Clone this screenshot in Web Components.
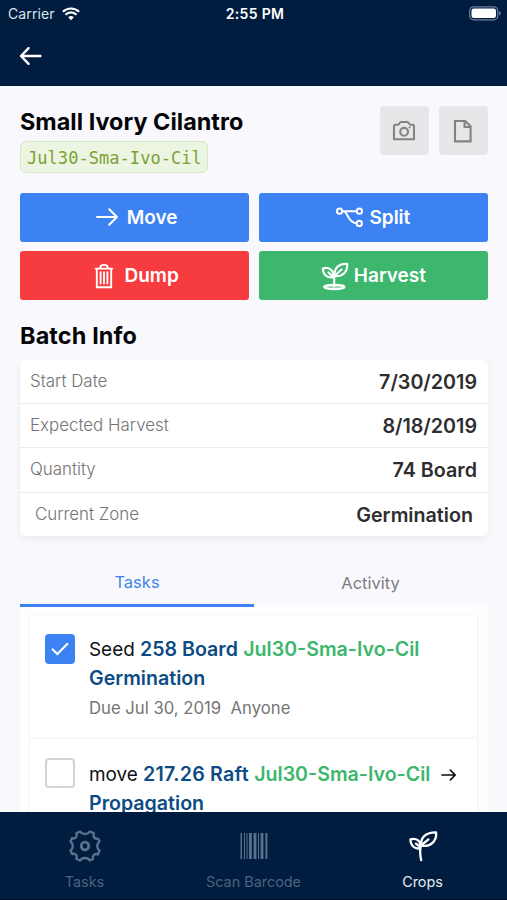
<!DOCTYPE html>
<html lang="en">
<head>
<meta charset="utf-8">
<title>Crops</title>
<style>
html,body{margin:0;height:100%;background:#f8f8fd;font-family:Inter,"Liberation Sans",sans-serif}
</style>
</head>
<body>
<crop-app></crop-app>
<script>
const ICONS = {
  wifi: `<svg width="18" height="14" viewBox="0 0 18 14" fill="#fff"><path d="M9 13.2 6.2 10.3a4 4 0 0 1 5.6 0Z"/><path d="M3.5 7.7a7.8 7.8 0 0 1 11 0M.9 4.8a11.6 11.6 0 0 1 16.2 0" fill="none" stroke="#fff" stroke-width="2.2"/></svg>`,
  battery: `<svg width="32" height="15" viewBox="0 0 32 15"><rect x=".7" y=".8" width="28" height="13" rx="3.8" fill="none" stroke="#6f7f9a" stroke-width="1.2"/><rect x="2.5" y="2.6" width="24.5" height="9.4" rx="2.2" fill="#fff"/><path d="M30 5v4.4q1.6-.8 1.6-2.2T30 5Z" fill="#7b8aa3"/></svg>`,
  back: `<svg width="24" height="20" viewBox="0 0 24 20" fill="none" stroke="#fff" stroke-width="2.4" stroke-linecap="round" stroke-linejoin="round"><path d="M21.4 10H2M9.6 2.2 2 10l7.6 7.8"/></svg>`,
  camera: `<svg width="24" height="22" viewBox="0 0 24 22" fill="none" stroke="#838383" stroke-width="2.1"><path d="M2 6.2Q2 4.8 3.4 4.8H5.2Q6.5 4.8 7.3 3.4T9.2 2H15Q16.3 2 17 3.4T19 4.8H20.7Q22 4.8 22 6.2V19.3H2Z"/><circle cx="12.1" cy="11.8" r="3.9"/><circle cx="17.6" cy="7.4" r="1.1" fill="#838383" stroke="none"/></svg>`,
  doc: `<svg width="20" height="24" viewBox="0 0 20 24" fill="none" stroke="#838383" stroke-width="2.1"><path d="M2 2H12.2L17.6 7.3V22.4H2Z"/><path d="M11.6 2V8H17.6"/></svg>`,
  move: `<svg width="24" height="20" viewBox="0 0 24 20" fill="none" stroke="#fff" stroke-width="2" stroke-linecap="round" stroke-linejoin="round"><path d="M2 10H22M14.2 2.2 22 10l-7.8 7.8"/></svg>`,
  trash: `<svg width="20" height="26" viewBox="0 0 20 26" fill="none" stroke="#fff" stroke-width="1.9" stroke-linecap="round" stroke-linejoin="round"><path d="M1.6 5.6H18.4M2.8 6V24.2H17.2V6M6.2 5C6.2 .8 13.8 .8 13.8 5M6.6 9.2V20.6M10 9.2V20.6M13.4 9.2V20.6"/></svg>`,
  split: `<svg width="28" height="22" viewBox="0 0 28 22" fill="none" stroke="#fff" stroke-width="2"><circle cx="3.6" cy="5.2" r="2.6"/><circle cx="23.4" cy="5.2" r="2.6"/><circle cx="23.3" cy="17.4" r="2.6"/><path d="M6.2 5.2H20.8M8.2 5.2C12 6.6 11.4 16.4 20.6 17.4"/></svg>`,
  harvest: `<svg width="28" height="30" viewBox="0 0 28 30" fill="none" stroke="#fff" stroke-width="2.1" stroke-linecap="round" stroke-linejoin="round"><path d="M13.2 15.2C13.2 6.6 18 2.4 26.2 2.8 26.6 10.8 22 16 13.2 15.2ZM12.4 16.2C6.4 17.4 2 14 1.8 7.4 8.4 5.6 12.8 9.2 12.4 16.2ZM13.2 15.2 20.6 8.4M12.4 16.2 7.4 11.4M13.2 15.4V25.4"/><ellipse cx="13.3" cy="26" rx="10.2" ry="2.1" fill="#fff" fill-opacity=".45"/></svg>`,
  check: `<svg width="18" height="14" viewBox="0 0 18 14" fill="none" stroke="#fff" stroke-width="2"><path d="M1 6.8 6.3 12 17 1.2"/></svg>`,
  arrow: `<svg width="16" height="14" viewBox="0 0 16 14" fill="none" stroke="#111" stroke-width="1.7" stroke-linecap="round" stroke-linejoin="round"><path d="M1 7H14.2M9.4 2.2 14.2 7 9.4 11.8"/></svg>`,
  gear: `<svg width="34" height="34" viewBox="0 0 34 34" fill="none" stroke="#5a708e" stroke-width="2.4" stroke-linejoin="round"><path d="M12.2 2.5C14.2 5.8 19.8 5.8 21.8 2.5L25.8 4.2C24.6 8 27 10.4 30 9.6L31.5 12.4C28.4 15 28.4 19 31.5 21.6L29.8 25.4C26.5 24.2 24 26.5 25 30L21.8 31.5C19.8 28.2 14.2 28.2 12.2 31.5L8.4 30C9.8 26.4 7.4 24 4.2 25L2.5 21.6C5.6 19 5.6 15 2.5 12.4L4 9.2C7.4 10.2 9.8 7.4 8.4 4Z"/><circle cx="17" cy="17" r="3.8" stroke-width="2.8"/></svg>`,
  barcode: `<svg width="28" height="28" viewBox="0 0 28 28" fill="#5a708e"><path d="M.5 1H2v26H.5zM4 1h1v26H4zM6.5 1h1v26h-1zM9 1h2.8v26H9zM13.6 1h2.8v26h-2.8zM18 1h1v26h-1zM20.6 1h2.8v26h-2.8zM25.4 1h2v26h-2z"/></svg>`,
  sprout: `<svg width="30" height="32" viewBox="0 0 30 32" fill="none" stroke="#fff" stroke-width="2.3" stroke-linecap="round" stroke-linejoin="round"><path d="M13.2 15.4C12.4 7 18.4 2.2 28 2.4 29.2 10.4 22.4 18 13.2 15.4ZM12.6 17.8C7.6 20 2.6 16.2 2.4 9.4 8.4 7.6 13.4 11 12.6 17.8ZM13.2 15.4 20.4 9.4M12.6 17.4 8 13.6M12.8 16C11.8 20.6 12 25.4 13.2 30.2"/></svg>`
};

function define(name, css, html) {
  customElements.define(name, class extends HTMLElement {
    constructor() {
      super();
      this.attachShadow({mode: 'open'}).innerHTML =
        '<style>*{box-sizing:border-box}:host{box-sizing:border-box}' + css + '</style>' + html;
    }
  });
}

customElements.define('ui-icon', class extends HTMLElement {
  constructor() { super(); this.attachShadow({mode: 'open'}); }
  connectedCallback() {
    this.shadowRoot.innerHTML =
      '<style>:host{display:inline-block;flex:none;line-height:0}svg{display:block}</style>' + ICONS[this.getAttribute('name')];
  }
});

define('status-bar',
  `:host{display:grid;grid-template-columns:1fr auto 1fr;align-items:center;height:28px;padding:0 6px 0 8px;color:#fff;font-size:14px;line-height:20px}
   .l{display:flex;align-items:center;gap:7px;color:#dfe4ec;letter-spacing:.1px}
   .t{font-weight:600;font-size:14px;letter-spacing:.35px;padding-left:1px}
   .r{display:flex;justify-content:flex-end;margin-top:-1px}`,
  `<div class="l"><span>Carrier</span><ui-icon name="wifi"></ui-icon></div><div class="t">2:55 PM</div><div class="r"><ui-icon name="battery"></ui-icon></div>`);

define('nav-header',
  `:host{display:block;background:#001d40;height:86px;flex:none}
   .bar{height:56px;display:flex;align-items:center;padding-left:19px}`,
  `<status-bar></status-bar><div class="bar"><ui-icon name="back"></ui-icon></div>`);

define('square-button',
  `:host{display:flex;align-items:center;justify-content:center;width:49px;height:49px;border-radius:4px;background:#e7e7e9}`,
  `<slot></slot>`);

define('code-tag',
  `:host{display:block;width:188px;height:32px;border:1px solid #d9e8c0;border-radius:6px;background:#ebf5e1;color:#7ba136;
    font:17px/32px "DejaVu Sans Mono",monospace;padding-left:6px;white-space:nowrap;letter-spacing:.05px}`,
  `<slot></slot>`);

define('action-button',
  `:host{display:flex;align-items:center;justify-content:center;height:49px;border-radius:3px;background:#3d82f2;color:#fff;font-weight:600;font-size:19px;gap:var(--gap,8px);padding-left:var(--shift,0)}
   :host([tone=danger]){background:#f63c3f}
   :host([tone=success]){background:#3cb76d}`,
  `<slot name="icon"></slot><span><slot></slot></span>`);

define('info-row',
  `:host{display:flex;justify-content:space-between;height:44.2px;padding:0 11px 0 10px;border-bottom:1px solid #ececef}
   :host(:last-child){border-bottom:0;padding:0 15px;height:43.6px}
   .k{font-size:16.9px;font-weight:300;color:#747474;line-height:42px}
   .v{font-size:19.7px;font-weight:600;color:#2e2e30;line-height:44px}`,
  `<span class="k"><slot name="label"></slot></span><span class="v"><slot></slot></span>`);

define('info-card',
  `:host{display:block;background:#fff;border-radius:5px;box-shadow:0 3px 8px rgba(0,0,0,.055)}`,
  `<slot></slot>`);

define('tab-bar',
  `:host{display:grid;grid-template-columns:1fr 1fr;height:44px;font-size:16.5px;text-align:center}
   .on{color:#4285e8;border-bottom:3px solid #3d82f2;line-height:43px}
   .off{color:#7d7d82;line-height:45px;padding-right:1px}`,
  `<div class="on"><slot name="active"></slot></div><div class="off"><slot></slot></div>`);

define('check-box',
  `:host{display:flex;align-items:center;justify-content:center;width:30px;height:30px;border-radius:4px;border:2px solid #d3d3d3;background:#fff;flex:none}
   ui-icon{display:none}
   :host([checked]){background:#3d82f2;border-color:#3d82f2}
   :host([checked]) ui-icon{display:block}`,
  `<ui-icon name="check"></ui-icon>`);

define('task-item',
  `:host{display:flex;gap:14px;height:125px;padding:18px 0 0 15px;border:2px solid #f7f7f8;border-top-color:#fbfbfc;border-radius:4px;background:#fff}
   :host(:last-child){border-top:0;padding-top:19.5px}
   .title{font-size:18.9px;line-height:29px;color:#111;white-space:nowrap;margin-top:1.5px}
   .meta{font-size:16.7px;line-height:22px;color:#757575;margin-top:4px;white-space:pre}
   ::slotted(b){font-weight:600;font-size:19.6px;color:#0d4b84}
   ::slotted(b.batch){color:#3cb76d}`,
  `<slot name="box"></slot><div><div class="title"><slot></slot></div><div class="meta"><slot name="meta"></slot></div></div>`);

define('tab-button',
  `:host{display:flex;flex-direction:column;align-items:center;color:#4c6180;font-size:14.4px;line-height:20px}
   :host([active]){color:#e6ebf2}
   .i{height:36px;display:flex;align-items:center;margin-bottom:8px}`,
  `<div class="i"><slot name="icon"></slot></div><span><slot></slot></span>`);

define('bottom-bar',
  `:host{display:grid;grid-template-columns:repeat(3,1fr);height:88px;padding-top:16px;background:#001d40;flex:none;border-bottom:1px solid #001027}`,
  `<slot></slot>`);

define('crop-app',
  `:host{display:flex;flex-direction:column;height:900px;width:507px;overflow:hidden;background:#f8f8fd}
   main{flex:1;min-height:0;overflow:hidden;padding:20px 19px 0 20px}
   .head{display:flex;justify-content:space-between;height:86.5px}
   .tools{display:flex;gap:10px;margin-right:.5px}
   h1,h2{margin:0;font-size:23.4px;font-weight:700;color:#050507;white-space:nowrap;letter-spacing:.03px}
   h1{line-height:32px;margin-bottom:3px}
   h2{line-height:30px;margin:20.5px 0 9.5px;letter-spacing:.15px}
   .actions{display:grid;grid-template-columns:1fr 1fr;gap:9.5px}
   tab-bar{margin-top:24.8px}
   .list{background:#fefefe;padding:9px 9px 0 8px;height:220px}
   .arr{position:relative;top:1px;margin-left:5px}
   .wide{letter-spacing:.25px}`,
  `<nav-header></nav-header>
   <main>
     <div class="head">
       <div><h1>Small Ivory Cilantro</h1><code-tag>Jul30-Sma-Ivo-Cil</code-tag></div>
       <div class="tools"><square-button><ui-icon name="camera"></ui-icon></square-button><square-button><ui-icon name="doc"></ui-icon></square-button></div>
     </div>
     <div class="actions">
       <action-button style="--shift:3px"><ui-icon slot="icon" name="move"></ui-icon>Move</action-button>
       <action-button style="--gap:5px"><ui-icon slot="icon" name="split"></ui-icon>Split</action-button>
       <action-button tone="danger" style="--gap:10px;--shift:4px"><ui-icon slot="icon" name="trash"></ui-icon>Dump</action-button>
       <action-button tone="success" style="--gap:5px;--shift:0px"><ui-icon slot="icon" name="harvest"></ui-icon>Harvest</action-button>
     </div>
     <h2>Batch Info</h2>
     <info-card>
       <info-row><span slot="label">Start Date</span>7/30/2019</info-row>
       <info-row><span slot="label">Expected Harvest</span>8/18/2019</info-row>
       <info-row><span slot="label">Quantity</span>74 Board</info-row>
       <info-row><span slot="label">Current Zone</span>Germination</info-row>
     </info-card>
     <tab-bar><span slot="active">Tasks</span>Activity</tab-bar>
     <div class="list">
       <task-item><check-box slot="box" checked></check-box>Seed <b>258 Board</b> <b class="batch">Jul30-Sma-Ivo-Cil</b><br><b>Germination</b><span slot="meta">Due Jul 30, 2019  Anyone</span></task-item>
       <task-item><check-box slot="box"></check-box>move <b class="wide">217.26 Raft</b> <b class="batch">Jul30-Sma-Ivo-Cil</b> <ui-icon class="arr" name="arrow"></ui-icon><br><b>Propagation</b></task-item>
     </div>
   </main>
   <bottom-bar>
     <tab-button><ui-icon slot="icon" name="gear"></ui-icon>Tasks</tab-button>
     <tab-button><ui-icon slot="icon" name="barcode"></ui-icon>Scan Barcode</tab-button>
     <tab-button active><ui-icon slot="icon" name="sprout"></ui-icon>Crops</tab-button>
   </bottom-bar>`);
</script>
</body>
</html>
